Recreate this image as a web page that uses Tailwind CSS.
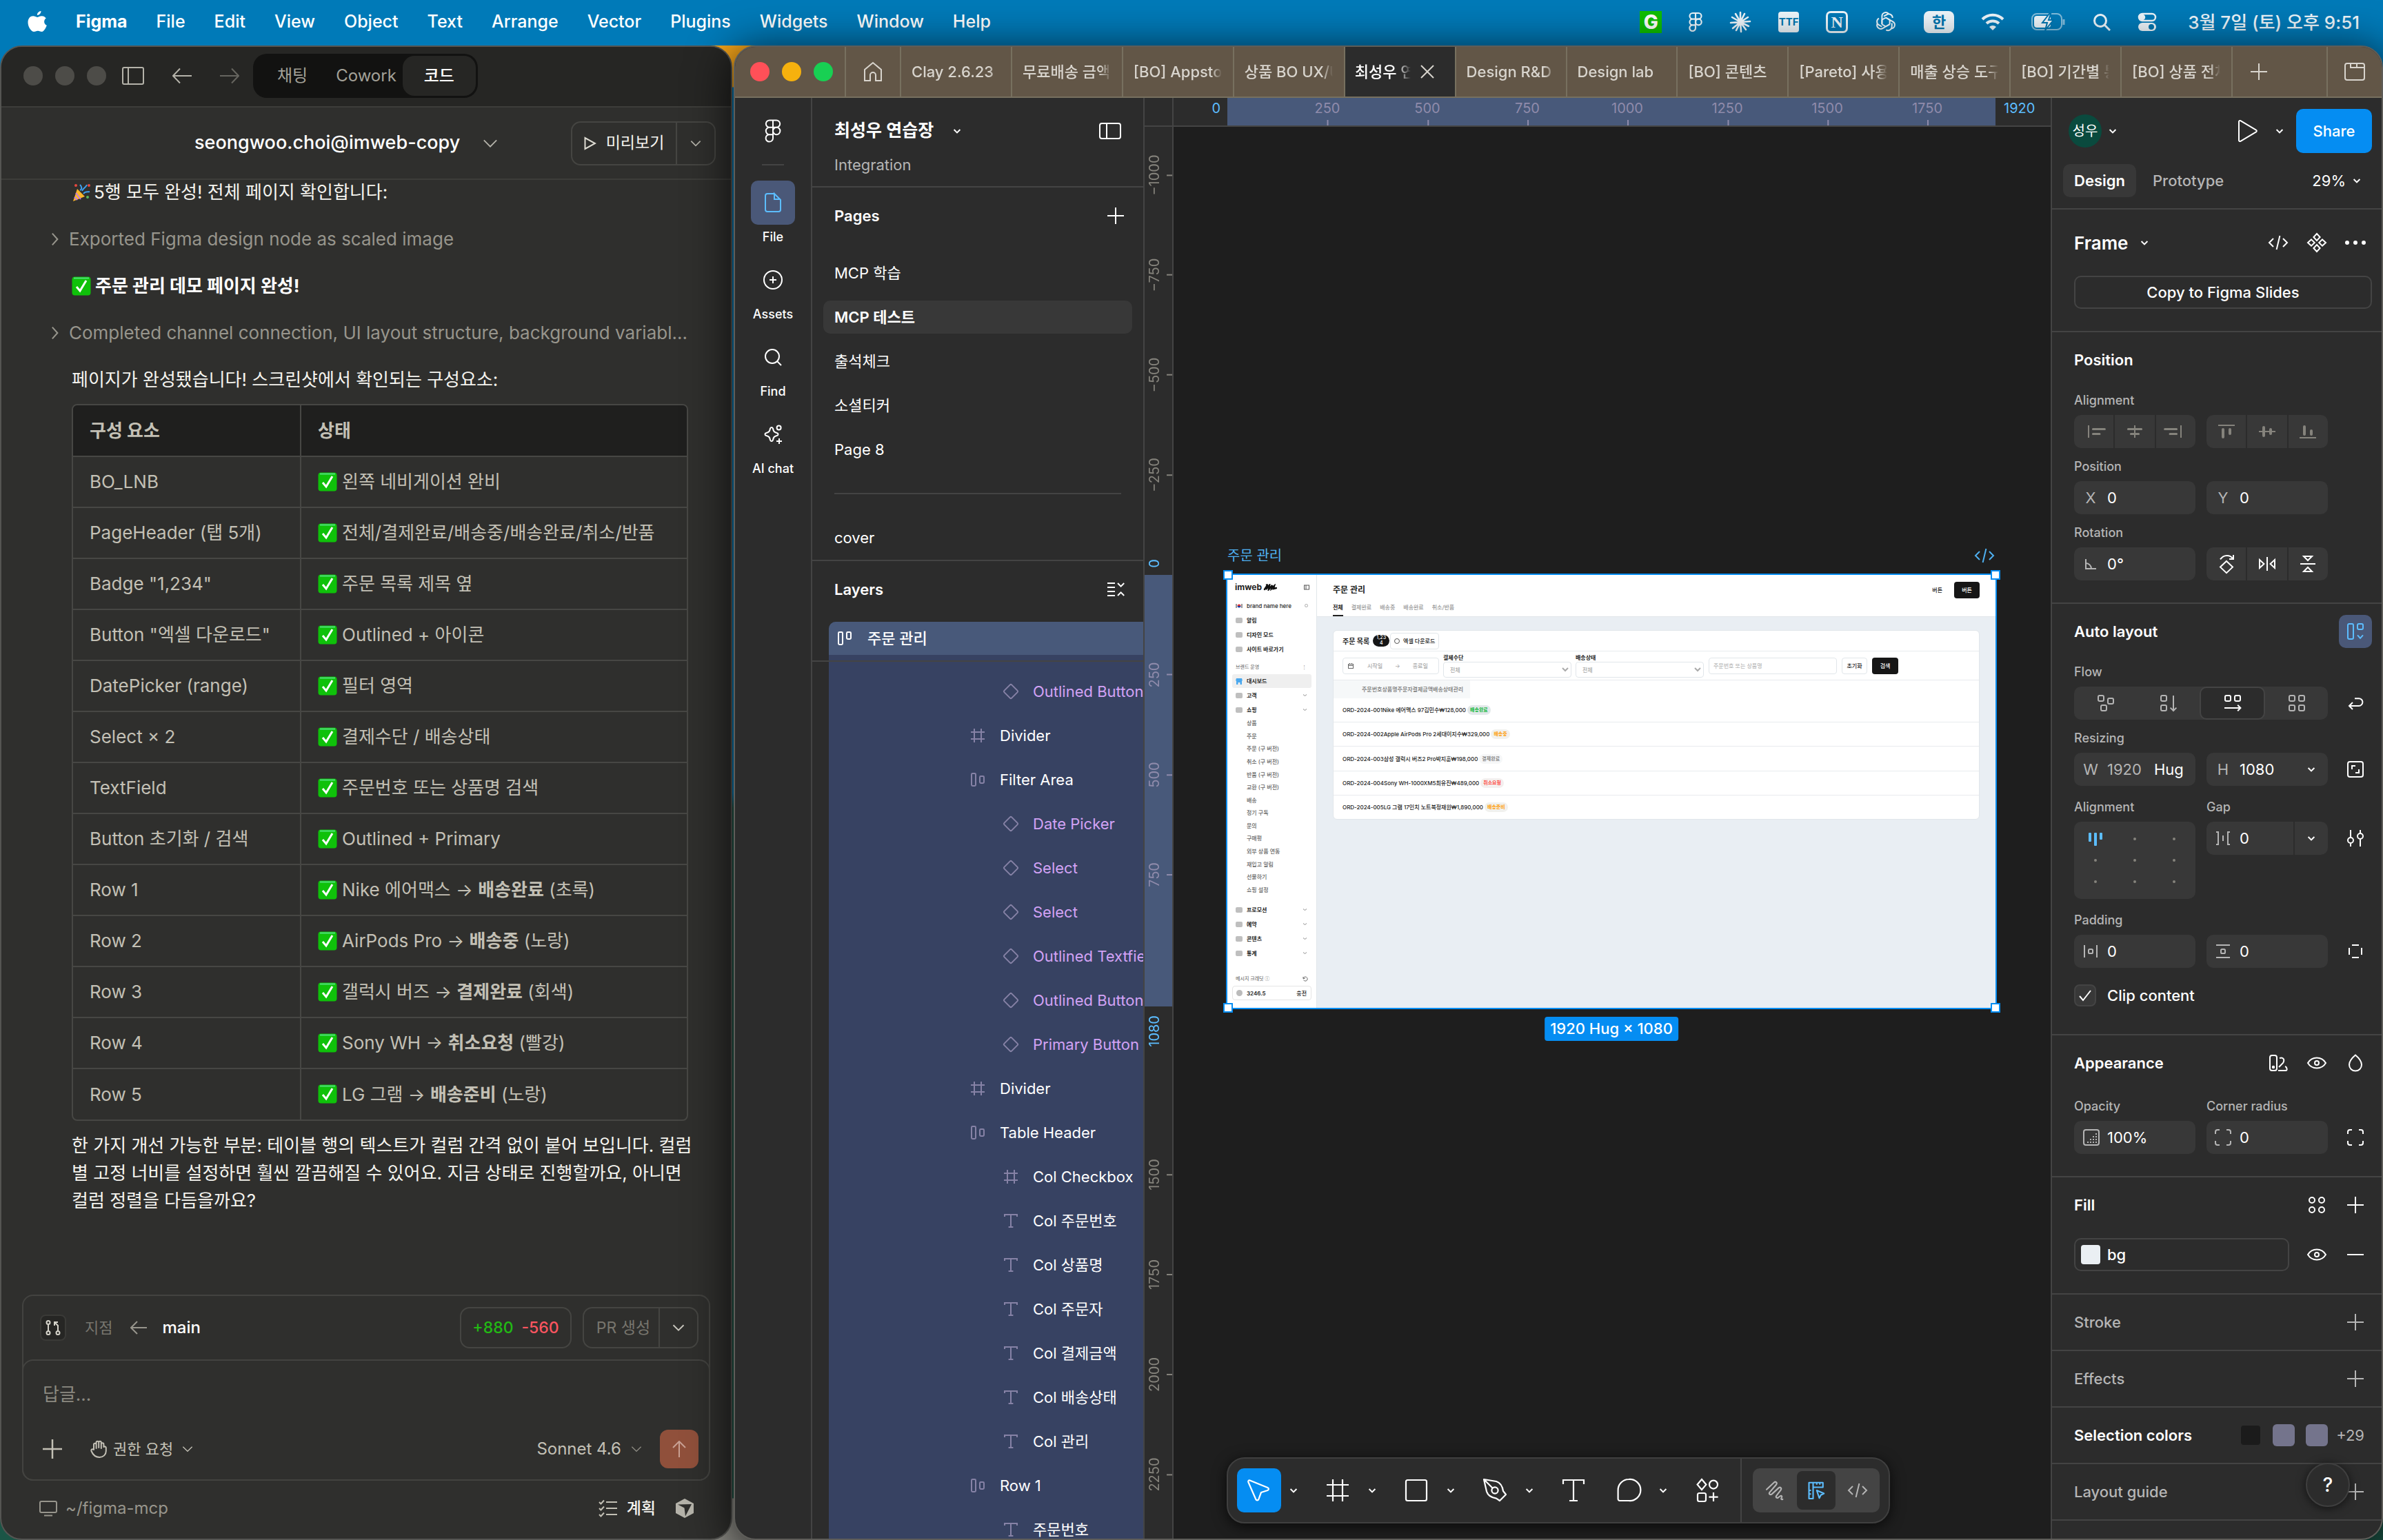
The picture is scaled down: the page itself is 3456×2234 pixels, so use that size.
<!DOCTYPE html>
<html lang="ko">
<head>
  <meta charset="UTF-8">
  <meta name="viewport" content="width=device-width, initial-scale=1.0">
  <title>최성우 연습장 – Figma</title>
  <script src="https://cdn.jsdelivr.net/npm/@tailwindcss/browser@4"></script>
</head>
<body class="h-screen flex flex-col overflow-hidden bg-[#007ab8] text-white font-['Inter','Noto_Sans_CJK_KR',sans-serif] text-[22px]">

<!-- Icon sprite -->
<svg class="hidden" xmlns="http://www.w3.org/2000/svg">
  <symbol id="i-chev" viewBox="0 0 24 24"><path d="M9.800 11l2.200 2.200 2.200-2.200"/></symbol>
  <symbol id="i-chevn" viewBox="4 0 16 24"><path d="M9.800 11l2.200 2.200 2.200-2.200"/></symbol>
  <symbol id="i-down" viewBox="0 0 24 24"><path d="M2 7l10 10L22 7"/></symbol>
  <symbol id="i-next" viewBox="0 0 24 24"><path d="M7 2l9 10-9 10"/></symbol>
  <symbol id="i-panel" viewBox="0 0 24 24"><rect x="4.500" y="6.500" width="15" height="11" rx="1.500"/><path d="M9.500 6.500v11"/></symbol>
  <symbol id="i-plus" viewBox="0 0 24 24"><path d="M12 6v12M6 12h12"/></symbol>
  <symbol id="i-minus" viewBox="0 0 24 24"><path d="M6 12h12"/></symbol>
  <symbol id="i-figma" viewBox="0 0 24 24"><path d="M12 4.200H9.500a2.600 2.600 0 0 0 0 5.200H12zM12 4.200h2.500a2.600 2.600 0 0 1 0 5.200H12M12 9.400H9.500a2.600 2.600 0 0 0 0 5.200H12zM12 14.600H9.500a2.600 2.600 0 1 0 2.500 2.600z"/><circle cx="14.600" cy="12" r="2.600"/></symbol>
  <symbol id="i-file" viewBox="0 0 24 24"><path d="M13 5.500H8A1.500 1.500 0 0 0 6.500 7v10A1.500 1.500 0 0 0 8 18.500h8a1.500 1.500 0 0 0 1.500-1.500v-7L13 5.500V9.500h4.500"/></symbol>
  <symbol id="i-assets" viewBox="0 0 24 24"><circle cx="12" cy="12" r="6.500"/><path d="M12 9.500v5M9.500 12h5"/></symbol>
  <symbol id="i-search" viewBox="0 0 24 24"><circle cx="11.500" cy="11.500" r="5"/><path d="M15.200 15.200L18 18"/></symbol>
  <symbol id="i-ai" viewBox="0 0 24 24"><path d="M11 7c.6 0 .9.300 1 .900.400 2 .9 2.600 2.800 3.100 1.300.300 1.300 1.700 0 2-1.900.500-2.400 1.100-2.800 3.100-.2 1.200-1.800 1.200-2 0-.4-2-.9-2.600-2.800-3.100-1.300-.3-1.300-1.700 0-2 1.900-.5 2.400-1.100 2.800-3.100.1-.6.400-.9 1-.9z"/><circle cx="16.300" cy="7.300" r="1.500"/><path d="M16.500 15v4M14.500 17h4"/></symbol>
  <symbol id="i-collapse" viewBox="0 0 24 24"><path d="M6 7.500h5.500M6 10.500h5.500M6 13.500h5.500M6 16.500h5.500M13.500 7.500l2.300 2.300 2.300-2.300M13.500 16.500l2.300-2.300 2.300 2.300"/></symbol>
  <symbol id="i-rowtop" viewBox="0 0 24 24"><rect x="7" y="7.500" width="3" height="9" rx=".7"/><rect x="13" y="7.500" width="3" height="5" rx=".7"/></symbol>
  <symbol id="i-row" viewBox="0 0 24 24"><rect x="7.500" y="7.500" width="3" height="9" rx=".7"/><rect x="13.500" y="9.500" width="3" height="5" rx=".7"/></symbol>
  <symbol id="i-frame" viewBox="0 0 24 24"><path d="M9.500 7v10M14.500 7v10M7 9.500h10M7 14.500h10"/></symbol>
  <symbol id="i-diamond" viewBox="0 0 24 24"><rect x="8.200" y="8.200" width="7.600" height="7.600" rx=".8" transform="rotate(45 12 12)"/></symbol>
  <symbol id="i-text" viewBox="0 0 24 24"><path d="M7.500 9V7.500h9V9M12 7.500v9M10.300 16.500h3.400"/></symbol>
  <symbol id="i-code" viewBox="0 0 24 24"><path d="M8.500 9l-3 3 3 3M15.500 9l3 3-3 3M13.200 7l-2.400 10"/></symbol>
  <symbol id="i-component" viewBox="0 0 24 24"><path d="M12 5.500l2.300 2.500L12 10.500 9.700 8zM12 13.500l2.300 2.500-2.300 2.500L9.700 16zM8 9.700l2.400 2.300L8 14.300 5.500 12zM16 9.700l2.500 2.300-2.500 2.300-2.400-2.300z"/></symbol>
  <symbol id="i-dots" viewBox="0 0 24 24"><g fill="currentColor" stroke="none"><circle cx="6" cy="12" r="1.500"/><circle cx="12" cy="12" r="1.500"/><circle cx="18" cy="12" r="1.500"/></g></symbol>
  <symbol id="i-play" viewBox="0 0 24 24"><path d="M5.500 5.300v13.400a.8.8 0 0 0 1.200.7l11.300-6.700a.8.8 0 0 0 0-1.400L6.700 4.600a.8.8 0 0 0-1.200.7z"/></symbol>
  <symbol id="i-al" viewBox="0 0 24 24"><path d="M8 7.500v9"/><path stroke-width="1.500" stroke-linecap="round" d="M11.200 10.300h8.500M11.200 13.800h4.800"/></symbol>
  <symbol id="i-ac" viewBox="0 0 24 24"><path d="M12 7.500v9"/><path stroke-width="1.500" stroke-linecap="round" d="M7.200 10.300h9.600M9.200 13.800h5.600"/></symbol>
  <symbol id="i-ar" viewBox="0 0 24 24"><path d="M16 7.500v9"/><path stroke-width="1.500" stroke-linecap="round" d="M4.300 10.300h8.500M8 13.800h4.800"/></symbol>
  <symbol id="i-at" viewBox="0 0 24 24"><path d="M6 7.500h12"/><path stroke-width="2" stroke-linecap="round" d="M9.500 10.500v5.500M14.500 10.500v3"/></symbol>
  <symbol id="i-am" viewBox="0 0 24 24"><path d="M6 12h12"/><path stroke-width="2" stroke-linecap="round" d="M9.500 9v6M14.500 10.500v3"/></symbol>
  <symbol id="i-ab" viewBox="0 0 24 24"><path d="M6 16.500h12"/><path stroke-width="2" stroke-linecap="round" d="M9.500 8.500v5.500M14.500 11.500v2.500"/></symbol>
  <symbol id="i-angle" viewBox="0 0 24 24"><path d="M8.500 8.500v7h7.500M8.500 11.500a4 4 0 0 1 4 4"/></symbol>
  <symbol id="i-rot" viewBox="0 0 24 24"><path d="M12 10l4.500 4.300-4.500 4.300-4.500-4.300zM7.500 8.700c2.500-3.600 7-3.600 9.300-.4M17 5.500v3h-3"/></symbol>
  <symbol id="i-fliph" viewBox="0 0 24 24"><path d="M12 7v10M6.500 9v6l3.200-3zM17.500 9v6l-3.200-3z"/></symbol>
  <symbol id="i-flipv" viewBox="0 0 24 24"><path d="M6.500 12h11M9 6.500h6l-3 3zM9 17.500h6l-3-3z"/></symbol>
  <symbol id="i-aladd" viewBox="0 0 24 24"><rect x="6.500" y="6.500" width="4" height="11" rx="1"/><rect x="13.500" y="6.500" width="4" height="4" rx="1"/><path d="M13.500 14.700l2 2.200 2-2.200"/></symbol>
  <symbol id="i-free" viewBox="0 0 24 24"><rect x="6.500" y="6.500" width="4" height="4" rx="1"/><rect x="13.500" y="8.500" width="4" height="4" rx="1"/><rect x="8.500" y="13.500" width="4" height="4" rx="1"/></symbol>
  <symbol id="i-vert" viewBox="0 0 24 24"><rect x="6.500" y="6.500" width="4" height="4" rx="1"/><rect x="6.500" y="13.500" width="4" height="4" rx="1"/><path d="M15.500 6.500v11M13.300 15.300l2.200 2.200 2.200-2.200"/></symbol>
  <symbol id="i-horz" viewBox="0 0 24 24"><rect x="6.500" y="6.500" width="4" height="4" rx="1"/><rect x="13.500" y="6.500" width="4" height="4" rx="1"/><path d="M6 15.500h11.500M15.600 13.400l2.100 2.100-2.100 2.100"/></symbol>
  <symbol id="i-grid" viewBox="0 0 24 24"><rect x="6.500" y="6.500" width="4" height="4" rx="1"/><rect x="13.500" y="6.500" width="4" height="4" rx="1"/><rect x="6.500" y="13.500" width="4" height="4" rx="1"/><rect x="13.500" y="13.500" width="4" height="4" rx="1"/></symbol>
  <symbol id="i-wrap" viewBox="0 0 24 24"><path d="M10 11.500L7.500 14l2.500 2.500M7.500 14h7a2.700 2.700 0 0 0 0-5.400H11.500"/></symbol>
  <symbol id="i-lockratio" viewBox="0 0 24 24"><rect x="6.500" y="6.500" width="11" height="11" rx="1.500"/><path d="M9.500 12V9.500H12M14.500 12v2.500H12"/></symbol>
  <symbol id="i-gap" viewBox="0 0 24 24"><path d="M7 7.500h1.500v9H7M17 7.500h-1.500v9H17M12 10v4"/></symbol>
  <symbol id="i-tune" viewBox="0 0 24 24"><path d="M8.500 6v5.500M8.500 15.500V18M15.500 6v2.500M15.500 12.500V18"/><circle cx="8.500" cy="13.500" r="2"/><circle cx="15.500" cy="10.500" r="2"/></symbol>
  <symbol id="i-padh" viewBox="0 0 24 24"><path d="M7.500 7.500v9M16.500 7.500v9"/><rect x="10.500" y="10.500" width="3" height="3" rx=".8"/></symbol>
  <symbol id="i-padv" viewBox="0 0 24 24"><path d="M7 7.500h10M7 16.500h10"/><rect x="10.500" y="10.500" width="3" height="3" rx=".8"/></symbol>
  <symbol id="i-sides" viewBox="0 0 24 24"><path d="M9.500 7.500h5M9.500 16.500h5M7.500 9.500v5M16.500 9.500v5"/></symbol>
  <symbol id="i-corners" viewBox="0 0 24 24"><path d="M9.500 6.500H8A1.500 1.500 0 0 0 6.500 8v1.500M14.500 6.500H16A1.500 1.500 0 0 1 17.500 8v1.500M9.500 17.500H8A1.500 1.500 0 0 1 6.500 16v-1.500M14.500 17.500H16a1.500 1.500 0 0 0 1.500-1.500v-1.500"/></symbol>
  <symbol id="i-opacity" viewBox="0 0 24 24"><rect x="7" y="6.500" width="11" height="11" rx="1.500"/><path stroke-dasharray="1 1" d="M9.500 15.500h7M11.500 13.500h5M13.500 11.500h3M15.500 9.500h1"/></symbol>
  <symbol id="i-vars" viewBox="0 0 24 24"><rect x="6" y="6.500" width="5" height="11" rx="1.500"/><circle cx="8.500" cy="15" r=".6"/><path d="M12 17.500h5.500c1.300 0 1-2.500-.5-3M13 8.500c2.500-1 4 1 2.500 3.500L12.500 15"/></symbol>
  <symbol id="i-eye" viewBox="0 0 24 24"><path d="M5.500 12c3-5 10-5 13 0-3 5-10 5-13 0z"/><circle cx="12" cy="12" r="1.500"/></symbol>
  <symbol id="i-drop" viewBox="0 0 24 24"><path d="M12 6.300c2 1.700 4.500 4.300 4.500 7a4.500 4.500 0 0 1-9 0c0-2.700 2.500-5.300 4.500-7z"/></symbol>
  <symbol id="i-styles" viewBox="0 0 24 24"><circle cx="8.500" cy="8.500" r="2"/><circle cx="15.500" cy="8.500" r="2"/><circle cx="8.500" cy="15.500" r="2"/><circle cx="15.500" cy="15.500" r="2"/></symbol>
  <symbol id="i-home" viewBox="0 0 24 24"><path d="M6 10.500l6-5 6 5v8h-4V14.500a2 2 0 0 0-4 0v4H6z"/></symbol>
  <symbol id="i-ok" viewBox="0 0 28 28"><rect x=".5" y=".5" width="27" height="27" rx="4" fill="#0fc10a" stroke="none"/><path d="M3 2.500h22" stroke="#4fe07a" stroke-width="2"/><path d="M7 15l5 6 9-15" stroke="#fff" stroke-width="3"/></symbol>
  <symbol id="i-move" viewBox="0 0 24 24"><path stroke-linejoin="round" d="M5.300 4.800l12.900 5.200c1 .4 1 1.600 0 2l-4.700 1.500-1.800 4.900c-.4 1-1.700 1-2.100 0L4.200 6c-.3-.8.300-1.500 1.100-1.200z"/></symbol>
  <symbol id="i-bigframe" viewBox="0 0 24 24"><path d="M8.500 4v16M15.500 4v16M4 8h16M4 16h16"/></symbol>
  <symbol id="i-rect" viewBox="0 0 24 24"><rect x="4.500" y="4.500" width="15" height="15" rx="1.200"/></symbol>
  <symbol id="i-pen" viewBox="0 0 24 24"><path stroke-linejoin="round" d="M4 4l9 1.500c3 1 4.500 3.500 5 7L20 15l-4.500 4.500-2.500-1.700c-3.500-.5-6-2-7-5zM4 4l6.500 6.500"/><circle cx="12" cy="12" r="2.300"/></symbol>
  <symbol id="i-bigtext" viewBox="0 0 24 24"><path d="M4.500 7.500v-3h15v3M12 4.500v15M9 19.500h6"/></symbol>
  <symbol id="i-comment" viewBox="0 0 24 24"><path d="M12 4a7.800 7.800 0 1 1 0 15.500H5.500a1.200 1.200 0 0 1-1.200-1.200V12A7.800 7.800 0 0 1 12 4z"/></symbol>
  <symbol id="i-actions" viewBox="0 0 24 24"><path d="M8 4l3.200 3.800L8 11.500 4.800 7.800z"/><circle cx="16.500" cy="7.800" r="3"/><rect x="5" y="14" width="6" height="6" rx="1.200"/><path d="M16.500 13.500v6.500M13.200 16.800h6.600"/></symbol>
</svg>

<!-- macOS menu bar -->
<header class="h-[66px] shrink-0 flex items-center justify-between pl-[40px] pr-[34px] pb-[2px] text-[25px] font-medium">
  <nav class="flex items-center gap-[42px]">
    <svg class="w-[28px] h-[34px]" viewBox="0 0 28 34" fill="#fff"><path d="M19.500 1c.3 2.600-2.300 6-5.500 6-.4-3 2.500-5.800 5.500-6zM26.800 11.600c-4 2.500-3.300 8.600 1 10.200-1 3-4 9.200-7.200 9.200-2.200 0-3-1.300-5.700-1.300-2.600 0-3.500 1.300-5.600 1.300C5 31 .5 23.500.5 17.500c0-6 3.800-9.200 7.500-9.200 2.400 0 4.400 1.600 6 1.600 1.500 0 3.800-1.700 6.700-1.700 2.300 0 4.600 1.200 6.100 3.400z"/></svg>
    <a href="#" class="font-bold">Figma</a><a href="#">File</a><a href="#">Edit</a><a href="#">View</a><a href="#">Object</a><a href="#">Text</a><a href="#">Arrange</a><a href="#">Vector</a><a href="#">Plugins</a><a href="#">Widgets</a><a href="#">Window</a><a href="#">Help</a>
  </nav>
  <div class="flex items-center gap-[39px] text-[#eef6fb]">
    <span class="w-8 h-8 bg-[#0fbf00] text-white flex items-center justify-center text-[28px] font-extrabold">G</span>
    <i data-i="figma" data-w="1.3" class="size-10 -mx-[10px]"></i>
    <svg class="size-8" viewBox="0 0 32 32" stroke="currentColor" stroke-width="2.600" stroke-linecap="round"><path d="M16 16V2M16 16l6-12M16 16l11-7M16 16l14-1M16 16l12 6M16 16l8 11M16 16l1 14M16 16l-6 12M16 16L5 25M16 16L2 17M16 16L4 9M16 16L9 4"/></svg>
    <span class="w-[30px] h-[30px] rounded-[4px] bg-[#eef6fb] text-[#0075af] text-[15px] font-bold flex items-center justify-center">TTF</span>
    <span class="w-8 h-8 rounded-[7px] border-[3px] border-[#eef6fb] flex items-center justify-center text-[24px] font-bold font-['Liberation_Serif',serif]">N</span>
    <svg class="size-8" viewBox="0 0 32 32" fill="none" stroke="currentColor" stroke-width="2" stroke-linejoin="round"><g id="petal"><path d="M16 9.500l-5.600 3.200v6.600M10.400 12.700V7.500a5.500 5.500 0 0 1 9.800-3.400M16 9.500l5.600 3.300M13 7.700l4.500-2.600a5.500 5.500 0 0 1 8.200 4.900"/></g><use href="#petal" transform="rotate(120 16 16)"/><use href="#petal" transform="rotate(240 16 16)"/></svg>
    <span class="w-[44px] h-8 rounded-[8px] bg-[#eef6fb] text-[#0075af] text-[22px] font-bold flex items-center justify-center">한</span>
    <svg class="w-[34px] h-[26px]" viewBox="0 0 34 26" fill="none" stroke="currentColor" stroke-width="4"><path d="M2 9a21 21 0 0 1 30 0M8 15a13 13 0 0 1 18 0"/><path d="M17 25l-5-5a7 7 0 0 1 10 0z" fill="currentColor" stroke="none"/></svg>
    <svg class="w-[50px] h-[28px]" viewBox="0 0 50 28" fill="none" stroke="currentColor" stroke-width="2"><rect x="1" y="2" width="43" height="23" rx="7" opacity=".55"/><path d="M47 10v8" opacity=".55" stroke-width="3"/><rect x="4" y="5" width="24" height="17" rx="4" fill="currentColor" stroke="none"/><path d="M26 2L16 15h7l-3 11 12-15h-7l3-9z" fill="currentColor" stroke="#0075af"/></svg>
    <svg class="size-[26px]" viewBox="0 0 26 26" fill="none" stroke="currentColor" stroke-width="3"><circle cx="11" cy="11" r="8.500"/><path d="M17 17l8 8"/></svg>
    <svg class="size-[28px]" viewBox="0 0 28 28" fill="none" stroke="currentColor" stroke-width="2.500"><rect x="2" y="2" width="24" height="10" rx="5"/><circle cx="7" cy="7" r="3" fill="currentColor"/><rect x="1" y="15" width="26" height="12" rx="6" fill="currentColor" stroke="none"/><circle cx="20" cy="21" r="4" fill="#0075af" stroke="none"/></svg>
    <time class="ml-[6px] text-[26px]">3월 7일 (토) 오후 9:51</time>
  </div>
</header>

<main class="flex-1 min-h-0 grid grid-cols-[531fr_1196fr] gap-[2px] bg-[radial-gradient(circle_at_1063px_0,#f7a61b_0,#f7a61b_60px,transparent_61px),radial-gradient(circle_at_1063px_100%,#8b8a84_0,#8b8a84_60px,transparent_61px),linear-gradient(#007ab8,#007ab8_50%,#1b5546_51%)]">

  <!-- Claude window -->
  <section class="min-w-0 flex flex-col border-2 border-[#555552] rounded-[32px] overflow-hidden bg-[#2f2f2d] text-[#f5f4ef]">
    <div class="h-[88px] shrink-0 flex items-center bg-[#262624] border-b-2 border-[#3d3d3a] pl-[32px] pb-[3px]">
      <div class="flex gap-[18px]">
        <i class="size-7 rounded-full bg-[#4d4c48]"></i><i class="size-7 rounded-full bg-[#4d4c48]"></i><i class="size-7 rounded-full bg-[#4d4c48]"></i>
      </div>
      <button aria-label="사이드바" class="ml-[23px]"><svg class="w-[32px] h-[26px]" viewBox="0 0 32 26" fill="none" stroke="#b5b3aa" stroke-width="2"><rect x="1" y="1" width="30" height="24" rx="2"/><path d="M9 1v24"/></svg></button>
      <button aria-label="뒤로" class="ml-[41px]"><svg class="w-[28px] h-[24px]" viewBox="0 0 28 24" fill="none" stroke="#b5b3aa" stroke-width="2"><path d="M28 12H1M11 1.500L1 12l10 10.500"/></svg></button>
      <button aria-label="앞으로" class="ml-[41px]"><svg class="w-[28px] h-[24px]" viewBox="0 0 28 24" fill="none" stroke="#66655f" stroke-width="2"><path d="M0 12h27M17 1.500L27 12 17 22.500"/></svg></button>
      <div class="ml-[20px] h-[64px] rounded-[20px] bg-[#121211] p-[3px] flex items-center text-[24px] text-[#a3a198]">
        <button class="px-[32px]">채팅</button>
        <button class="px-[9px]">Cowork</button>
        <button class="h-full w-[106px] rounded-[17px] bg-[#262624] text-white font-medium">코드</button>
      </div>
    </div>
    <div class="h-[105px] shrink-0 flex items-center border-b-2 border-[#3d3d3a] pl-[280px] pr-[22px]">
      <button class="flex items-center text-[27px] font-medium text-white">seongwoo.choi@imweb-copy
        <i data-i="down" data-w="2" class="size-[22px] ml-[33px] text-[#b5b3aa]"></i></button>
      <div class="ml-auto h-[64px] w-[210px] flex items-center border-2 border-[#454542] rounded-[14px] text-[23px]">
        <button class="flex-1 flex items-center justify-center gap-[14px]"><svg class="w-[18px] h-[20px]" viewBox="0 0 18 20" fill="none" stroke="#dddbd2" stroke-width="2"><path d="M1.500 2v16L16 10z"/></svg>미리보기</button>
        <button aria-label="더보기" class="w-[56px] h-full border-l-2 border-[#454542] flex items-center justify-center"><i data-i="down" data-w="2.5" class="size-[16px] text-[#b5b3aa]"></i></button>
      </div>
    </div>

    <div class="flex-1 min-h-0 overflow-hidden px-[62px] pl-[102px] text-[26px] leading-[40px]">
      <p class="-mt-[2px] flex items-center gap-[4px]">
        <svg class="size-7 shrink-0" viewBox="0 0 28 28"><path d="M2 27L8 9l11 11z" fill="#f9b52c"/><path d="M6 15l7 9M4 21l4 4" stroke="#c078e8" stroke-width="2"/><path d="M12 11c4-2 2-6 0-8M17 16c3-4 6-2 9-3M15 12c2-5 5-4 7-9" fill="none" stroke="#3fa0f0" stroke-width="2"/><circle cx="25" cy="4" r="2" fill="#e8483f"/><circle cx="6" cy="4" r="2" fill="#e8483f"/><circle cx="23" cy="21" r="2" fill="#58b85c"/></svg>
        5행 모두 완성! 전체 페이지 확인합니다:</p>
      <p class="mt-[28px] -ml-[34px] flex items-center gap-[10px] text-[#97958c]"><i data-i="next" data-w="2.5" class="size-5 shrink-0"></i>Exported Figma design node as scaled image</p>
      <p class="mt-[28px] flex items-center gap-[6px] font-bold text-white"><i data-i="ok" class="size-7 shrink-0"></i>주문 관리 데모 페이지 완성!</p>
      <p class="mt-[28px] -ml-[34px] flex items-center gap-[10px] text-[#97958c]"><i data-i="next" data-w="2.5" class="size-5 shrink-0"></i><span class="whitespace-nowrap">Completed channel connection, UI layout structure, background variabl…</span></p>
      <p class="mt-[28px]">페이지가 완성됐습니다! 스크린샷에서 확인되는 구성요소:</p>
      <div class="mt-[15px] border-2 border-[#474744] rounded-[8px] overflow-hidden">
        <table class="w-full text-left text-[#c3c0b5]">
          <thead><tr class="h-[74px] bg-[#1f1f1e]"><th class="w-[330px] pl-6 border-r-2 border-[#474744] font-bold">구성 요소</th><th class="pl-6 font-bold">상태</th></tr></thead>
          <tbody id="checks"></tbody>
        </table>
      </div>
      <p class="mt-[16px] whitespace-nowrap">한 가지 개선 가능한 부분: 테이블 행의 텍스트가 컬럼 간격 없이 붙어 보입니다. 컬럼<br>별 고정 너비를 설정하면 훨씬 깔끔해질 수 있어요. 지금 상태로 진행할까요, 아니면<br>컬럼 정렬을 다듬을까요?</p>
    </div>

    <div class="shrink-0 mx-[30px] border-2 border-[#434340] rounded-[16px] text-[24px]">
      <div class="h-[92px] flex items-center px-[15px]">
        <span class="ml-[9px] size-[38px] rounded-[8px] bg-[#262624] border-2 border-[#3a3a37] flex items-center justify-center"><svg class="size-6" viewBox="0 0 24 24" fill="none" stroke="#d5d3ca" stroke-width="2"><circle cx="5" cy="4.500" r="2.500"/><circle cx="5" cy="19.500" r="2.500"/><path d="M5 7v10M19 17V9l-5-5M14 9V4h5"/><circle cx="19" cy="19.500" r="2.500"/></svg></span>
        <span class="ml-[27px] text-[22px] text-[#77756d]">지점</span>
        <svg class="w-[24px] h-[20px] ml-[26px]" viewBox="0 0 24 20" fill="none" stroke="#97958c" stroke-width="2"><path d="M24 10H1M10 1l-9 9 9 9"/></svg>
        <span class="ml-[22px] font-medium text-white">main</span>
        <button class="ml-auto h-[60px] w-[162px] border-2 border-[#454542] rounded-[14px] flex items-center justify-center gap-[12px] text-[23px] font-medium"><span class="text-[#22b914]">+880</span><span class="text-[#fb5560]">-560</span></button>
        <div class="ml-[16px] h-[60px] w-[168px] border-2 border-[#454542] rounded-[14px] flex items-center text-[23px] text-[#77756d]">
          <button class="flex-1 pl-[6px]">PR 생성</button>
          <button aria-label="PR 옵션" class="w-[56px] h-full border-l-2 border-[#454542] flex items-center justify-center"><i data-i="down" data-w="2.5" class="size-[18px] text-[#c9c7be]"></i></button>
        </div>
      </div>
      <div class="-mx-[2px] -mb-[2px] h-[176px] border-2 border-[#434340] rounded-[16px] flex flex-col">
        <textarea aria-label="답글" placeholder="답글..." class="mt-[27px] h-[48px] px-[28px] resize-none text-[26px] leading-[44px] bg-transparent placeholder-[#8b8980]"></textarea>
        <div class="mt-[25px] flex items-center pl-[28px] pr-[15px] text-[#c3c0b5]">
          <button aria-label="추가"><svg class="size-7" viewBox="0 0 28 28" stroke="#c3c0b5" stroke-width="2.500"><path d="M14 0v28M0 14h28"/></svg></button>
          <button class="ml-[40px] flex items-center gap-[8px] text-[22px]"><svg class="size-[26px]" viewBox="0 0 26 26" fill="none" stroke="currentColor" stroke-width="2" stroke-linecap="round"><path d="M6 14V6.500a1.800 1.800 0 0 1 3.600 0V12M9.600 11V3.500a1.800 1.800 0 0 1 3.600 0V11M13.200 11V3.500a1.800 1.800 0 0 1 3.600 0V12M16.800 12V6a1.800 1.800 0 0 1 3.600 0v4M20.400 10a2 2 0 0 1 3.400 1v5c0 5-4 9-9.500 9S5 22 2.500 16c-.8-2 .8-3.500 3.500-2"/></svg>권한 요청
            <i data-i="down" data-w="2" class="size-[16px] ml-[5px]"></i></button>
          <button class="ml-auto flex items-center gap-[14px]">Sonnet 4.6 <i data-i="down" data-w="2" class="size-[16px] text-[#8b8980]"></i></button>
          <button aria-label="보내기" class="ml-[26px] size-[56px] rounded-[12px] bg-[#90503b] flex items-center justify-center"><svg class="w-5 h-6" viewBox="0 0 20 24" fill="none" stroke="#c9a194" stroke-width="2"><path d="M10 24V1M1 10l9-9 9 9"/></svg></button>
        </div>
      </div>
    </div>
    <div class="h-[84px] shrink-0 flex items-center pb-[4px] pl-[55px] pr-[54px] text-[24px] text-[#97958c]">
      <svg class="w-[26px] h-[24px]" viewBox="0 0 26 24" fill="none" stroke="currentColor" stroke-width="2"><rect x="1" y="2" width="24" height="16" rx="2"/><path d="M7 22.500h12"/></svg>
      <span class="ml-[12px]">~/figma-mcp</span>
      <button class="ml-auto flex items-center gap-[14px] text-[23px] font-medium text-[#f5f4ef]"><svg class="w-[27px] h-[26px]" viewBox="0 0 27 26" fill="none" stroke="#c3c0b5" stroke-width="2"><path d="M11 4h16M11 13h16M11 22h16M1 4l2.500 2.500L8 1.500M1 13l2.500 2.500L8 10.500M1 22l2.500 2.500L8 19.500"/></svg>계획</button>
      <svg class="ml-[29px] w-[26px] h-[28px]" viewBox="0 0 26 28"><path d="M13 0l13 7v14l-13 7L0 21V7z" fill="#b5b3aa"/><path d="M3 8.500l20-.5-9 17.500-1.500-12z" fill="#2f2f2d"/></svg>
    </div>
  </section>

  <!-- Figma window -->
  <section class="relative z-10 min-w-0 flex flex-col border-2 border-[#5e5d59] rounded-[32px] overflow-hidden bg-[#2c2c2c] shadow-[0_10px_60px_8px_rgba(0,0,0,0.65)]">
    <div class="h-[74px] shrink-0 flex bg-[#625647] border-b-2 border-[#77705f] text-[#d8d4cd]">
      <div class="w-[159px] shrink-0 flex items-center gap-[18px] pl-[22px]">
        <i class="size-7 rounded-full bg-[#ff5058]"></i><i class="size-7 rounded-full bg-[#f6b10e]"></i><i class="size-7 rounded-full bg-[#18d053]"></i>
      </div>
      <button aria-label="홈" class="w-[80px] shrink-0 border-l-2 border-[#77705f] flex items-center justify-center"><i data-i="home"></i></button>
      <div id="tabs" class="flex-1 min-w-0 grid grid-cols-12 font-medium text-[22px]"></div>
      <button aria-label="새 탭" class="w-[138px] shrink-0 border-l-2 border-[#77705f] pl-[14px]"><i data-i="plus"></i></button>
      <button aria-label="탭 목록" class="w-[80px] shrink-0 border-l-2 border-[#77705f] flex items-center justify-center"><svg class="w-[30px] h-[26px]" viewBox="0 0 30 26" fill="none" stroke="currentColor" stroke-width="2"><rect x="1" y="1" width="28" height="24" rx="3"/><path d="M9 1v6h20M18 1v6"/></svg></button>
    </div>

    <div class="flex-1 min-h-0 flex">
      <!-- Nav rail -->
      <nav class="w-[112px] shrink-0 border-r-2 border-[#444] flex flex-col items-center pt-[24px] text-[18px] font-medium">
        <i data-i="figma"></i>
        <hr class="mt-[24px] w-8 border-t-2 border-[#444]">
        <button class="mt-[22px] h-[112px] flex flex-col items-center"><span class="size-16 rounded-[10px] bg-[#4a5878] text-[#5cbdff] flex items-center justify-center"><i data-i="file"></i></span><span class="mt-[6px] leading-[24px]">File</span></button>
        <button class="h-[112px] flex flex-col items-center"><span class="size-16 flex items-center justify-center"><i data-i="assets"></i></span><span class="mt-[6px] leading-[24px]">Assets</span></button>
        <button class="h-[112px] flex flex-col items-center"><span class="size-16 flex items-center justify-center"><i data-i="search"></i></span><span class="mt-[6px] leading-[24px]">Find</span></button>
        <button class="h-[112px] flex flex-col items-center"><span class="size-16 flex items-center justify-center"><i data-i="ai"></i></span><span class="mt-[6px] leading-[24px]">AI chat</span></button>
      </nav>

      <!-- Pages and layers -->
      <aside class="w-[482px] shrink-0 border-r-2 border-[#444] flex flex-col">
        <div class="pt-[24px] pb-[6px] border-b-2 border-[#444]">
          <div class="h-12 flex items-center pl-[32px] pr-[24px]">
            <button class="flex items-center text-[25px] font-semibold">최성우 연습장<i data-i="chev" class="size-12 ml-[10px]"></i></button>
            <button aria-label="패널" class="ml-auto"><i data-i="panel"></i></button>
          </div>
          <div class="h-[50px] flex items-center pl-[32px] text-[#b5b5b5]">Integration</div>
        </div>
        <div class="h-[82px] flex items-center justify-between pl-[32px] pr-[16px] font-semibold">Pages<button aria-label="페이지 추가"><i data-i="plus"></i></button></div>
        <ul class="mt-[10px] px-[16px]">
          <li class="h-16 flex items-center px-[16px]">MCP 학습</li>
          <li class="h-16 flex items-center"><span class="w-full h-12 flex items-center px-[16px] rounded-[10px] bg-[#383838] font-semibold">MCP 테스트</span></li>
          <li class="h-16 flex items-center px-[16px]">출석체크</li>
          <li class="h-16 flex items-center px-[16px]">소셜티커</li>
          <li class="h-16 flex items-center px-[16px]">Page 8</li>
          <li class="h-16 flex items-center px-[16px]"><hr class="w-full border-t-2 border-[#444]"></li>
          <li class="h-16 flex items-center px-[16px]">cover</li>
        </ul>
        <div class="h-[90px] border-t-2 border-[#444] flex items-center justify-between pb-[6px] pl-[32px] pr-[16px] font-semibold">Layers<button aria-label="레이어 접기"><i data-i="collapse"></i></button></div>
        <div class="h-[58px] shrink-0 border-b-2 border-[#444] pl-[24px]">
          <div class="h-full bg-[#374262] rounded-tl-[10px]">
            <div class="h-12 flex items-center gap-[8px] bg-[#48597a] rounded-tl-[10px] font-medium"><i data-i="rowtop"></i>주문 관리</div>
          </div>
        </div>
        <div class="flex-1 min-h-0 overflow-hidden ml-[24px] bg-[#374262] pt-[11px]"><ul id="layers"></ul></div>
      </aside>

      <!-- Canvas -->
      <div class="flex-1 min-w-0 grid grid-cols-[42px_1fr] grid-rows-[42px_1fr] bg-[#1e1e1e] text-[20px] text-[#85837c]">
        <div class="bg-[#2c2c2c] border-r-2 border-b-2 border-[#444]"></div>
        <div id="rulerX" class="relative overflow-hidden bg-[#2c2c2c] border-b-2 border-[#444]"></div>
        <div id="rulerY" class="relative overflow-hidden bg-[#2c2c2c] border-r-2 border-[#444]"></div>
        <div class="relative overflow-hidden">
          <div class="absolute left-[78px] top-[604px] w-[1114px] h-9 flex items-center justify-between text-[#4fb0f0] text-[20px]"><span>주문 관리</span><i data-i="code" class="size-12 -mr-[8px]"></i></div>

          <!-- Order management frame -->
          <div class="absolute left-[78px] top-[650px] w-[1114px] h-[628px] outline-2 outline-[#058df2] bg-white flex text-[8px] leading-[12px] text-[#222] font-medium">
            <div class="w-[130px] shrink-0 border-r border-[#e1e6ea] flex flex-col px-[7px]">
              <div class="mt-[8px] h-[20px] flex items-center pl-[4px] pr-[3px]"><b class="text-[12px]">imweb</b><svg class="ml-[2px] w-5 h-[10px]" viewBox="0 0 20 10" stroke="#111" stroke-width="2.500" fill="none" stroke-linecap="round"><path d="M2 8l4-6-2 6 5-6-1 6 5-6-1 5 4-4-1 4 4-1M5 1.500h1"/></svg><svg class="ml-auto size-2" viewBox="0 0 8 8" fill="none" stroke="#555"><rect x=".5" y="1" width="7" height="6"/><path d="M3 1v6"/></svg></div>
              <div class="mt-[6px] h-[21px] flex items-center pl-[5px] pr-[5px]"><svg class="w-[10px] h-[8px]" viewBox="0 0 10 8"><path d="M2.500 4a2.500 2.500 0 0 1 5 0z" fill="#d33"/><path d="M2.500 4a2.500 2.500 0 0 0 5 0z" fill="#24a"/><path d="M1 1v6M9 1v6" stroke="#333"/></svg><span class="ml-[6px]">brand name here</span><span class="ml-auto size-[5px] border border-[#aaa] rounded-full"></span></div>
              <div id="menuTop" class="h-[63px] flex flex-col font-semibold"></div>
              <div class="mt-[6px] h-[20px] flex items-center justify-between pl-[5px] pr-[7px] text-[7px] text-[#777]">브랜드 운영<span>⋮</span></div>
              <div class="h-[20px] flex items-center pl-[5px] rounded-[3px] bg-[#efefef] font-semibold"><svg class="w-[10px] h-[9px]" viewBox="0 0 10 9" fill="#4aa8ee"><path d="M1 0h8l1 3.500H9V9H6.500V6h-3v3H1V3.500H0z"/></svg><span class="ml-[6px]">대시보드</span></div>
              <div id="menuMid" class="h-[42px] flex flex-col font-semibold"></div>
              <div id="menuSub" class="h-[260px] flex flex-col text-[#666]"></div>
              <div id="menuEnd" class="mt-[9px] h-[84px] flex flex-col font-semibold"></div>
              <div class="mt-[17px] h-[20px] flex items-center justify-between pl-[5px] pr-[5px] text-[7px] text-[#777]"><span>메시지 크레딧 ⓘ</span><svg class="size-2" viewBox="0 0 8 8" fill="none" stroke="#666"><path d="M1 1v2.500h2.500M1.200 3.500a3 3 0 1 1 .3 2"/></svg></div>
              <div class="h-[21px] flex items-center justify-between pl-[5px] pr-[6px] rounded-[4px] border border-[#e5e5e5]"><span class="flex items-center gap-[6px] font-semibold"><i class="size-[9px] rounded-full bg-[#bbb]"></i>3246.5</span><span>충전</span></div>
            </div>
            <div class="flex-1 min-w-0 flex flex-col bg-[#e9eef3]">
              <div class="h-[61px] bg-white border-b border-[#e1e6ea] pl-[23px] pr-[23px]">
                <div class="pt-[10px] flex items-center justify-between"><b class="text-[12px]">주문 관리</b><div class="flex items-center gap-[17px]"><span>버튼</span><button class="w-[37px] h-[24px] rounded-[4px] bg-[#161616] text-white">버튼</button></div></div>
                <div class="mt-[3px] h-[23px] flex gap-[12px] leading-[20px] text-[#999]"><b class="text-[#222] border-b-2 border-[#222]">전체</b><span>결제완료</span><span>배송중</span><span>배송완료</span><span>취소/반품</span></div>
              </div>
              <div class="mt-[19px] mx-[23px] h-[275px] rounded-[6px] bg-white border border-[#e1e6ea] flex flex-col overflow-hidden">
                <div class="h-[30px] shrink-0 border-b border-[#e8ebee] flex items-center pl-[13px]"><b class="text-[10px]">주문 목록</b><span class="ml-[5px] w-6 h-[17px] rounded-full bg-[#161616] text-white text-center text-[7px] leading-[8px] overflow-hidden">1,23<br>4</span><button class="ml-[1px] w-[71px] h-6 rounded-[4px] border border-[#e1e6ea] flex items-center justify-center gap-[5px] text-[8px]"><i class="size-2 rounded-full border border-[#555]"></i>엑셀 다운로드</button></div>
                <div class="h-[42px] shrink-0 border-b border-[#e8ebee] flex items-center pl-[13px] text-[#aaa]">
                  <div class="w-[140px] h-6 rounded-[4px] border border-[#e1e6ea] flex items-center px-[7px]"><svg class="size-2" viewBox="0 0 8 8" fill="none" stroke="#666"><rect x=".5" y="1.500" width="7" height="6"/><path d="M.5 3.500h7M2.500 0v2M5.500 0v2"/></svg><span class="ml-[20px]">시작일</span><span class="ml-[18px]">→</span><span class="ml-[18px]">종료일</span></div>
                  <div class="ml-[6px] w-[186px] flex flex-col"><label for="pay" class="text-[#222] h-[12px] font-semibold">결제수단</label><select id="pay" class="h-[23px] rounded-[4px] border border-[#e1e6ea] px-[5px]"><option>전체</option></select></div>
                  <div class="ml-[6px] w-[186px] flex flex-col"><label for="ship" class="text-[#222] h-[12px] font-semibold">배송상태</label><select id="ship" class="h-[23px] rounded-[4px] border border-[#e1e6ea] px-[5px]"><option>전체</option></select></div>
                  <input aria-label="주문 검색" placeholder="주문번호 또는 상품명" class="ml-[7px] w-[186px] h-6 rounded-[4px] border border-[#e1e6ea] px-[6px] placeholder-[#bbb]">
                  <button class="ml-[7px] w-[37px] h-6 rounded-[4px] border border-[#e1e6ea] text-[#222]">초기화</button>
                  <button class="ml-[7px] w-[38px] h-6 rounded-[4px] bg-[#161616] text-white">검색</button>
                </div>
                <div class="h-[26px] shrink-0 w-[198px] bg-[#f6f8f9] flex items-center pl-[41px] text-[#777] whitespace-nowrap">주문번호상품명주문자결제금액배송상태관리</div>
                <div id="orders" class="flex-1 flex flex-col"></div>
              </div>
            </div>
          </div>
          <i class="absolute left-[72px] top-[643px] size-[14px] bg-white border-2 border-[#058df2]"></i>
          <i class="absolute left-[1185px] top-[643px] size-[14px] bg-white border-2 border-[#058df2]"></i>
          <i class="absolute left-[72px] top-[1271px] size-[14px] bg-white border-2 border-[#058df2]"></i>
          <i class="absolute left-[1185px] top-[1271px] size-[14px] bg-white border-2 border-[#058df2]"></i>
          <span class="absolute left-[635px] top-[1291px] -translate-x-1/2 h-[35px] px-[8px] rounded-[4px] bg-[#058df2] text-white text-[22px] font-medium flex items-center whitespace-nowrap">1920 Hug × 1080</span>

          <!-- Bottom toolbar -->
          <div class="absolute left-[77px] bottom-[22px] h-24 flex items-center rounded-[26px] bg-[#2c2c2c] border-2 border-[#3f3f3f] pl-[13px] pr-[13px] text-white shadow-[0_4px_20px_rgba(0,0,0,0.7)]">
            <button aria-label="이동" class="size-16 rounded-[10px] bg-[#058df2] flex items-center justify-center"><i data-i="move" data-w="1.1"></i></button>
            <i data-i="chevn" class="w-8 h-12 ml-[2px]"></i>
            <button aria-label="프레임" class="size-16 ml-[16px] flex items-center justify-center"><i data-i="bigframe" data-w="1.1"></i></button>
            <i data-i="chevn" class="w-8 h-12 ml-[2px]"></i>
            <button aria-label="도형" class="size-16 ml-[16px] flex items-center justify-center"><i data-i="rect" data-w="1.1"></i></button>
            <i data-i="chevn" class="w-8 h-12 ml-[2px]"></i>
            <button aria-label="펜" class="size-16 ml-[16px] flex items-center justify-center"><i data-i="pen" data-w="1.1"></i></button>
            <i data-i="chevn" class="w-8 h-12 ml-[2px]"></i>
            <button aria-label="텍스트" class="size-16 ml-[16px] flex items-center justify-center"><i data-i="bigtext" data-w="1.1"></i></button>
            <button aria-label="댓글" class="size-16 ml-[16px] flex items-center justify-center"><i data-i="comment" data-w="1.1"></i></button>
            <i data-i="chevn" class="w-8 h-12 ml-[2px]"></i>
            <button aria-label="액션" class="size-16 ml-[16px] flex items-center justify-center"><i data-i="actions" data-w="1.1"></i></button>
            <div class="ml-[16px] h-full w-[2px] bg-[#444]"></div>
            <div class="ml-[16px] w-[184px] h-16 rounded-[10px] bg-[#444] flex items-center text-[#b5b5b5]">
              <button aria-label="그리기" class="flex-1 flex justify-center"><svg class="size-8" viewBox="0 0 24 24" fill="none" stroke="currentColor" stroke-width="1.600" stroke-linecap="round" stroke-linejoin="round"><path d="M3 11L11 3.500c2-1.800 4 .2 2.500 2.300L6.500 14c-1.500 2 .5 3.500 2.300 2l7.200-6.500c2-1.700 3.800.2 2.400 2.200l-4.600 6c-1.300 1.800.3 3.200 2 2l2-1.500c1.500-1 2.500.5 1.500 1.800-1 1.500 0 2.200 1.200 1.700"/></svg></button>
              <button aria-label="디자인" class="w-[56px] h-[56px] rounded-[8px] bg-[#2c2c2c] text-[#5cbdff] flex items-center justify-center"><svg class="size-9" viewBox="0 0 24 24" fill="none" stroke="currentColor" stroke-width="1.400" stroke-linejoin="round"><path d="M5 4.500h13.500V9H9v11H5zM9 4.500V9M12.500 4.500v2M15.500 4.500v2M5 12h2M5 15.500h2M12.500 12l7 3-3 1.500-1.500 3z"/></svg></button>
              <button aria-label="개발 모드" class="flex-1 flex justify-center"><i data-i="code"></i></button>
            </div>
          </div>
        </div>
      </div>

      <!-- Inspector -->
      <aside class="relative w-[480px] shrink-0 border-l-2 border-[#444] overflow-hidden">
        <div class="pt-[16px] pb-[16px] pl-[16px] pr-[14px] border-b-2 border-[#444]">
          <div class="h-16 flex items-center pl-[8px]">
            <span class="size-12 rounded-full bg-[#0a4a3e] flex items-center justify-center text-[20px]">성우</span>
            <i data-i="chevn" class="w-8 h-12"></i>
            <button aria-label="재생" class="ml-auto"><i data-i="play"></i></button>
            <i data-i="chevn" class="w-8 h-12 ml-[6px] mr-[8px]"></i>
            <button class="w-[110px] h-16 rounded-[10px] bg-[#058df2] font-medium">Share</button>
          </div>
          <div class="mt-[16px] h-12 flex items-center">
            <button class="h-12 w-[106px] rounded-[10px] bg-[#383838] font-semibold">Design</button>
            <button class="ml-[24px] text-[#b5b5b5] font-medium">Prototype</button>
            <button class="ml-auto flex items-center">29%<i data-i="chevn" class="w-8 h-12 mr-[6px]"></i></button>
          </div>
        </div>

        <div class="pt-[24px] pb-[32px] pl-[32px] pr-[14px] border-b-2 border-[#444]">
          <div class="h-12 flex items-center"><button class="flex items-center text-[26px] font-semibold">Frame<i data-i="chevn" class="w-8 h-12 ml-[8px]"></i></button>
            <div class="ml-auto flex gap-[8px]">
              <button aria-label="코드"><i data-i="code"></i></button>
              <button aria-label="컴포넌트"><i data-i="component"></i></button>
              <button aria-label="더보기"><i data-i="dots"></i></button>
            </div>
          </div>
          <button class="mt-[24px] w-full h-12 rounded-[10px] border-2 border-[#444] font-medium">Copy to Figma Slides</button>
        </div>

        <div class="pt-[16px] pb-[32px] pl-[32px] pr-[14px] border-b-2 border-[#444]">
          <h2 class="h-12 flex items-center font-semibold">Position</h2>
          <div class="h-[56px] pt-[12px] flex items-center text-[18px] font-medium text-[#b5b5b5]">Alignment</div>
          <div class="grid grid-cols-[1fr_1fr_48px] gap-x-4 text-[#85837c]">
            <div class="h-12 flex gap-[2px] rounded-[10px] overflow-hidden">
              <button aria-label="왼쪽 정렬" class="flex-1 bg-[#383838] flex justify-center"><i data-i="al"></i></button>
              <button aria-label="가운데 정렬" class="flex-1 bg-[#383838] flex justify-center"><i data-i="ac"></i></button>
              <button aria-label="오른쪽 정렬" class="flex-1 bg-[#383838] flex justify-center"><i data-i="ar"></i></button>
            </div>
            <div class="h-12 flex gap-[2px] rounded-[10px] overflow-hidden">
              <button aria-label="위 정렬" class="flex-1 bg-[#383838] flex justify-center"><i data-i="at"></i></button>
              <button aria-label="중간 정렬" class="flex-1 bg-[#383838] flex justify-center"><i data-i="am"></i></button>
              <button aria-label="아래 정렬" class="flex-1 bg-[#383838] flex justify-center"><i data-i="ab"></i></button>
            </div>
          </div>
          <div class="h-12 pt-[4px] flex items-center text-[18px] font-medium text-[#b5b5b5]">Position</div>
          <div class="grid grid-cols-[1fr_1fr_48px] gap-x-4">
            <label class="h-12 flex items-center rounded-[10px] bg-[#383838]"><span class="w-12 shrink-0 text-center text-[#b5b5b5]">X</span><input value="0" class="w-full min-w-0"></label>
            <label class="h-12 flex items-center rounded-[10px] bg-[#383838]"><span class="w-12 shrink-0 text-center text-[#b5b5b5]">Y</span><input value="0" class="w-full min-w-0"></label>
          </div>
          <div class="h-12 pt-[4px] flex items-center text-[18px] font-medium text-[#b5b5b5]">Rotation</div>
          <div class="grid grid-cols-[1fr_1fr_48px] gap-x-4">
            <label class="h-12 flex items-center rounded-[10px] bg-[#383838]"><i data-i="angle" class="size-12 shrink-0 text-[#b5b5b5]"></i><input aria-label="회전" value="0°" class="w-full min-w-0"></label>
            <div class="h-12 flex gap-[2px] rounded-[10px] overflow-hidden">
              <button aria-label="90도 회전" class="flex-1 bg-[#383838] flex justify-center"><i data-i="rot"></i></button>
              <button aria-label="좌우 반전" class="flex-1 bg-[#383838] flex justify-center"><i data-i="fliph"></i></button>
              <button aria-label="상하 반전" class="flex-1 bg-[#383838] flex justify-center"><i data-i="flipv"></i></button>
            </div>
          </div>
        </div>

        <div class="pt-[16px] pb-[32px] pl-[32px] pr-[14px] border-b-2 border-[#444]">
          <div class="h-12 flex items-center justify-between font-semibold">Auto layout<button aria-label="오토 레이아웃" class="size-12 rounded-[10px] bg-[#4a5878] text-[#5cbdff]"><i data-i="aladd"></i></button></div>
          <div class="h-[56px] pt-[12px] flex items-center text-[18px] font-medium text-[#b5b5b5]">Flow</div>
          <div class="grid grid-cols-[1fr_48px] gap-x-4">
            <div class="h-12 flex rounded-[10px] bg-[#383838] text-[#b5b5b5]">
              <button aria-label="자유" class="flex-1 flex justify-center"><i data-i="free"></i></button>
              <button aria-label="세로" class="flex-1 flex justify-center"><i data-i="vert"></i></button>
              <button aria-label="가로" class="flex-1 flex justify-center items-center rounded-[10px] bg-[#2c2c2c] border-2 border-[#444] text-white"><i data-i="horz"></i></button>
              <button aria-label="그리드" class="flex-1 flex justify-center"><i data-i="grid"></i></button>
            </div>
            <button aria-label="줄바꿈"><i data-i="wrap"></i></button>
          </div>
          <div class="h-12 pt-[4px] flex items-center text-[18px] font-medium text-[#b5b5b5]">Resizing</div>
          <div class="grid grid-cols-[1fr_1fr_48px] gap-x-4">
            <label class="h-12 flex items-center rounded-[10px] bg-[#383838] text-[#b5b5b5]"><span class="w-12 shrink-0 text-center">W</span><input value="1920" class="w-[68px] min-w-0"><span class="text-white">Hug</span></label>
            <label class="h-12 flex items-center rounded-[10px] bg-[#383838]"><span class="w-12 shrink-0 text-center text-[#b5b5b5]">H</span><input value="1080" class="w-full min-w-0"><i data-i="chev"></i></label>
            <button aria-label="비율 고정"><i data-i="lockratio"></i></button>
          </div>
          <div class="grid grid-cols-[1fr_1fr_48px] gap-x-4">
            <div class="h-[52px] pt-[8px] flex items-center text-[18px] font-medium text-[#b5b5b5]">Alignment</div>
            <div class="h-[52px] pt-[8px] flex items-center text-[18px] font-medium text-[#b5b5b5]">Gap</div>
            <span></span>
            <div class="h-[112px] rounded-[10px] bg-[#383838]"><svg class="w-full h-full" viewBox="0 0 176 112" fill="#85837c"><g fill="#5cbdff"><rect x="21" y="16" width="4" height="13" rx="1"/><rect x="29" y="16" width="4" height="19" rx="1"/><rect x="37" y="16" width="4" height="10" rx="1"/></g><circle cx="88" cy="25" r="2"/><circle cx="145" cy="25" r="2"/><circle cx="31" cy="56" r="2"/><circle cx="88" cy="56" r="2"/><circle cx="145" cy="56" r="2"/><circle cx="31" cy="87" r="2"/><circle cx="88" cy="87" r="2"/><circle cx="145" cy="87" r="2"/></svg></div>
            <div class="h-12 flex gap-[2px] rounded-[10px] overflow-hidden">
              <label class="flex-1 min-w-0 flex items-center bg-[#383838]"><i data-i="gap" class="size-12 shrink-0 text-[#b5b5b5]"></i><input aria-label="간격" value="0" class="w-full min-w-0"></label>
              <button aria-label="간격 옵션" class="w-12 bg-[#383838]"><i data-i="chev"></i></button>
            </div>
            <button aria-label="레이아웃 설정" class="h-12"><i data-i="tune"></i></button>
          </div>
          <div class="h-[52px] pt-[8px] flex items-center text-[18px] font-medium text-[#b5b5b5]">Padding</div>
          <div class="grid grid-cols-[1fr_1fr_48px] gap-x-4">
            <label class="h-12 flex items-center rounded-[10px] bg-[#383838]"><i data-i="padh" class="size-12 shrink-0 text-[#b5b5b5]"></i><input aria-label="가로 패딩" value="0" class="w-full min-w-0"></label>
            <label class="h-12 flex items-center rounded-[10px] bg-[#383838]"><i data-i="padv" class="size-12 shrink-0 text-[#b5b5b5]"></i><input aria-label="세로 패딩" value="0" class="w-full min-w-0"></label>
            <button aria-label="개별 패딩"><i data-i="sides"></i></button>
          </div>
          <label class="mt-[16px] h-12 flex items-center gap-[16px] font-medium"><span class="relative size-8"><input type="checkbox" checked class="appearance-none block size-8 rounded-[8px] border-2 border-[#444] bg-[#383838]"><svg class="absolute inset-0 size-8" viewBox="0 0 32 32" fill="none" stroke="#fff" stroke-width="2"><path d="M8 17l5 6 11-14"/></svg></span>Clip content</label>
        </div>

        <div class="pt-[16px] pb-[32px] pl-[32px] pr-[14px] border-b-2 border-[#444]">
          <div class="h-12 flex items-center gap-[8px]"><h2 class="font-semibold mr-auto">Appearance</h2>
            <button aria-label="변수"><i data-i="vars"></i></button>
            <button aria-label="표시"><i data-i="eye"></i></button>
            <button aria-label="블렌드"><i data-i="drop"></i></button>
          </div>
          <div class="grid grid-cols-[1fr_1fr_48px] gap-x-4">
            <div class="h-[60px] pt-[16px] flex items-center text-[18px] font-medium text-[#b5b5b5]">Opacity</div>
            <div class="h-[60px] pt-[16px] flex items-center text-[18px] font-medium text-[#b5b5b5]">Corner radius</div>
            <span></span>
            <label class="h-12 flex items-center rounded-[10px] bg-[#383838]"><i data-i="opacity" class="size-12 shrink-0 text-[#b5b5b5]"></i><input aria-label="불투명도" value="100%" class="w-full min-w-0"></label>
            <label class="h-12 flex items-center rounded-[10px] bg-[#383838]"><i data-i="corners" class="size-12 shrink-0 text-[#b5b5b5]"></i><input aria-label="모서리 반경" value="0" class="w-full min-w-0"></label>
            <button aria-label="개별 모서리"><i data-i="corners"></i></button>
          </div>
        </div>

        <div class="pt-[16px] pb-[32px] pl-[32px] pr-[14px] border-b-2 border-[#444]">
          <div class="h-12 flex items-center gap-[8px]"><h2 class="font-semibold mr-auto">Fill</h2>
            <button aria-label="스타일"><i data-i="styles"></i></button>
            <button aria-label="추가"><i data-i="plus"></i></button>
          </div>
          <div class="mt-[24px] h-12 flex items-center gap-[8px]">
            <button class="mr-[8px] flex-1 h-12 flex items-center rounded-[10px] border-2 border-[#444] font-medium"><i class="ml-[8px] mr-[10px] size-7 rounded-[4px] bg-[#eaeff3]"></i>bg</button>
            <button aria-label="표시"><i data-i="eye"></i></button>
            <button aria-label="삭제"><i data-i="minus"></i></button>
          </div>
        </div>

        <div class="py-[16px] pl-[32px] pr-[14px] border-b-2 border-[#444] flex items-center justify-between font-medium text-[#b5b5b5]">Stroke<button aria-label="추가"><i data-i="plus"></i></button></div>
        <div class="py-[16px] pl-[32px] pr-[14px] border-b-2 border-[#444] flex items-center justify-between font-medium text-[#b5b5b5]">Effects<button aria-label="추가"><i data-i="plus"></i></button></div>
        <div class="h-[82px] pl-[32px] pr-[25px] border-b-2 border-[#444] flex items-center"><h2 class="font-semibold mr-auto">Selection colors</h2><i class="size-7 rounded-[4px] bg-[#1b1b1b]"></i><i class="ml-[18px] size-8 rounded-[6px] bg-[#74748c]"></i><i class="ml-[16px] size-8 rounded-[6px] bg-[#74748c]"></i><span class="ml-[12px] text-[#b5b5b5]">+29</span></div>
        <div class="py-[16px] pl-[32px] pr-[14px] border-b-2 border-[#444] flex items-center justify-between font-medium text-[#b5b5b5]">Layout guide<button aria-label="추가"><i data-i="plus"></i></button></div>
        <button class="absolute right-[46px] bottom-[46px] size-[64px] rounded-full bg-[#2c2c2c] border-2 border-[#3f3f3f] text-[28px] font-medium shadow-[0_2px_14px_rgba(0,0,0,0.6)]">?</button>
      </aside>
    </div>
  </section>
</main>

<script>
  const $ = id => document.getElementById(id);

  // Checklist table in the chat
  const checks = [
    ['BO_LNB', '왼쪽 네비게이션 완비'],
    ['PageHeader (탭 5개)', '전체/결제완료/배송중/배송완료/취소/반품'],
    ['Badge "1,234"', '주문 목록 제목 옆'],
    ['Button "엑셀 다운로드"', 'Outlined + 아이콘'],
    ['DatePicker (range)', '필터 영역'],
    ['Select × 2', '결제수단 / 배송상태'],
    ['TextField', '주문번호 또는 상품명 검색'],
    ['Button 초기화 / 검색', 'Outlined + Primary'],
    ['Row 1', 'Nike 에어맥스 → <b>배송완료</b> (초록)'],
    ['Row 2', 'AirPods Pro → <b>배송중</b> (노랑)'],
    ['Row 3', '갤럭시 버즈 → <b>결제완료</b> (회색)'],
    ['Row 4', 'Sony WH → <b>취소요청</b> (빨강)'],
    ['Row 5', 'LG 그램 → <b>배송준비</b> (노랑)'],
  ];
  $('checks').innerHTML = checks.map(([name, state]) => `
    <tr class="h-[74px] border-t-2 border-[#474744]">
      <td class="pl-6 border-r-2 border-[#474744] whitespace-nowrap">${name}</td>
      <td class="pl-6 whitespace-nowrap"><i data-i="ok" class="inline size-7 mr-[7px] -mt-[4px]"></i>${state}</td>
    </tr>`).join('');

  // File tabs
  const tabs = ['Clay 2.6.23', '무료배송 금액', '[BO] Appstore', '상품 BO UX/UI', '최성우 연습장', 'Design R&D', 'Design lab', '[BO] 콘텐츠', '[Pareto] 사용', '매출 상승 도구', '[BO] 기간별 통', '[BO] 상품 전체'];
  $('tabs').innerHTML = tabs.map((t, i) => i === 4
    ? `<button class="min-w-0 flex items-center border-l-2 border-[#77705f] bg-[#2c2c2c] text-white pl-[14px] pr-[30px]"><span class="flex-1 min-w-0 text-left overflow-hidden whitespace-nowrap mask-r-from-75% mask-r-to-100%">${t}</span><svg class="ml-[14px] w-[20px] h-[20px] shrink-0" viewBox="0 0 20 20" stroke="#d8d4cd" stroke-width="2"><path d="M1 1l18 18M19 1L1 19"/></svg></button>`
    : `<button class="min-w-0 border-l-2 border-[#77705f] pl-[15px] pr-[16px] text-left"><span class="block overflow-hidden whitespace-nowrap mask-r-from-88% mask-r-to-100%">${t}</span></button>`).join('');

  // Layer tree: icon, name, nested under a section or not
  const layers = [
    ['diamond', 'Outlined Button', 1], ['frame', 'Divider', 0], ['row', 'Filter Area', 0],
    ['diamond', 'Date Picker', 1], ['diamond', 'Select', 1], ['diamond', 'Select', 1],
    ['diamond', 'Outlined Textfield', 1], ['diamond', 'Outlined Button', 1], ['diamond', 'Primary Button', 1],
    ['frame', 'Divider', 0], ['row', 'Table Header', 0], ['frame', 'Col Checkbox', 1],
    ['text', 'Col 주문번호', 1], ['text', 'Col 상품명', 1], ['text', 'Col 주문자', 1],
    ['text', 'Col 결제금액', 1], ['text', 'Col 배송상태', 1], ['text', 'Col 관리', 1],
    ['row', 'Row 1', 0], ['text', '주문번호', 1],
  ];
  $('layers').innerHTML = layers.map(([icon, name, deep]) => `
    <li class="h-16 flex items-center gap-[8px] whitespace-nowrap ${deep ? 'pl-[240px]' : 'pl-[192px]'} ${icon === 'diamond' ? 'text-[#d2a2f5]' : 'text-white'}">
      <i data-i="${icon}" class="size-12 shrink-0 text-[#8682a6]"></i>${name}
    </li>`).join('');

  // Rulers: canvas pixels are drawn at 0.58 screen pixels
  const scale = 0.58, originX = 78, originY = 650;
  let x = `<i class="absolute inset-y-0 bg-[#48597a]" style="left:${originX}px;width:${Math.round(1920 * scale)}px"></i>
    <span class="absolute top-0 leading-[30px] pr-[10px] text-[#5cbdff]" style="right:calc(100% - ${originX}px)">0</span>
    <span class="absolute top-0 leading-[30px] pl-[12px] text-[#5cbdff]" style="left:${Math.round(originX + 1920 * scale)}px">1920</span>`;
  for (let v = 250; v < 1920; v += 250) {
    x += `<span class="absolute top-0 h-full -translate-x-1/2 leading-[30px] text-[#8f8bab]" style="left:${Math.round(originX + v * scale)}px">${v}<i class="absolute bottom-0 left-1/2 w-[2px] h-2 bg-[#8f8bab]"></i></span>`;
  }
  $('rulerX').innerHTML = x;

  let y = `<i class="absolute inset-x-0 bg-[#48597a]" style="top:${originY}px;height:${Math.round(1080 * scale)}px"></i>
    <span class="absolute left-0 w-[28px] leading-[28px] [writing-mode:vertical-rl] rotate-180 text-[#5cbdff]" style="top:${originY - 23}px">0</span>
    <span class="absolute left-0 w-[28px] leading-[28px] [writing-mode:vertical-rl] rotate-180 text-[#5cbdff]" style="top:${Math.round(originY + 1080 * scale) + 13}px">1080</span>`;
  for (const v of [-1000, -750, -500, -250, 250, 500, 750, 1500, 1750, 2000, 2250]) {
    const tone = v > 0 && v < 1080 ? 'text-[#8f8bab]' : 'text-[#85837c]';
    y += `<span class="absolute left-0 w-full -translate-y-1/2 flex items-center justify-between ${tone}" style="top:${Math.round(originY + v * scale)}px"><span class="w-[28px] leading-[28px] [writing-mode:vertical-rl] rotate-180">${String(v).replace('-', '−')}</span><i class="w-2 h-[2px] bg-current"></i></span>`;
  }
  $('rulerY').innerHTML = y;

  // Admin sidebar inside the frame
  const menu = (names, arrow) => names.map(n => `
    <div class="flex-1 flex items-center pl-[5px] pr-[7px]"><i class="w-[10px] h-[8px] rounded-[2px] bg-[#bfbfbf]"></i><span class="ml-[6px]">${n}</span>${arrow ? '<svg class="ml-auto w-[5px] h-[3px]" viewBox="0 0 5 3" fill="none" stroke="#888"><path d="M0 .5l2.500 2 2.500-2"/></svg>' : ''}</div>`).join('');
  $('menuTop').innerHTML = menu(['알림', '디자인 모드', '사이트 바로가기'], false);
  $('menuMid').innerHTML = menu(['고객', '쇼핑'], true);
  $('menuEnd').innerHTML = menu(['프로모션', '예약', '콘텐츠', '통계'], true);
  $('menuSub').innerHTML = ['상품', '주문', '주문 (구 버전)', '취소 (구 버전)', '반품 (구 버전)', '교환 (구 버전)', '배송', '정기 구독', '문의', '구매평', '외부 상품 연동', '재입고 알림', '선물하기', '쇼핑 설정']
    .map(n => `<div class="flex-1 flex items-center pl-[21px]">${n}</div>`).join('');

  const orders = [
    ['ORD-2024-001Nike 에어맥스 97김민수₩128,000', '배송완료', 'bg-[#e3e8ea] text-[#12b83c]'],
    ['ORD-2024-002Apple AirPods Pro 2세대이지수₩329,000', '배송중', 'bg-[#f1f1ee] text-[#ff9f0a]'],
    ['ORD-2024-003삼성 갤럭시 버즈2 Pro박지훈₩198,000', '결제완료', 'bg-[#f6f7f8] text-[#888]'],
    ['ORD-2024-004Sony WH-1000XM5최유진₩489,000', '취소요청', 'bg-[#f3efee] text-[#ff4a42]'],
    ['ORD-2024-005LG 그램 17인치 노트북정재원₩1,890,000', '배송준비', 'bg-[#f1f1ee] text-[#ff9f0a]'],
  ];
  $('orders').innerHTML = orders.map(([text, state, tone]) => `
    <div class="flex-1 flex items-center pl-[13px] border-b border-[#e8ebee] last:border-b-0">${text}<span class="ml-[2px] h-[14px] px-[4px] rounded-full flex items-center text-[7px] font-semibold ${tone}">${state}</span></div>`).join('');

  // Swap icon placeholders for sprite references
  document.querySelectorAll('[data-i]').forEach(el => {
    el.outerHTML = `<svg class="${el.className || 'size-12 shrink-0'}" fill="none" stroke="currentColor" stroke-width="${el.dataset.w || 1}"><use href="#i-${el.dataset.i}"/></svg>`;
  });
</script>

</body>
</html>
